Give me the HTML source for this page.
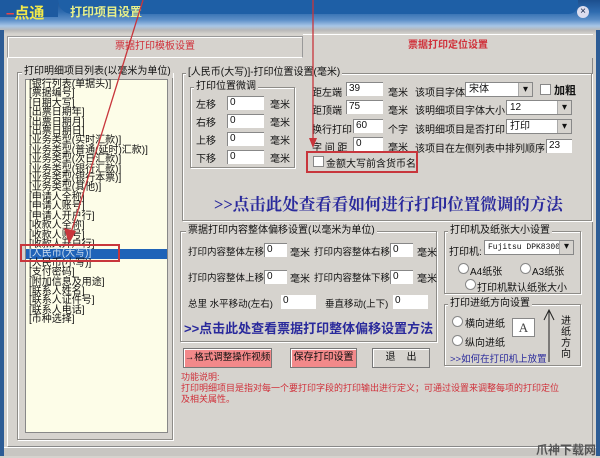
<!DOCTYPE html><html><head><meta charset="utf-8"><style>
*{margin:0;padding:0;box-sizing:border-box}
body{width:600px;height:456px;overflow:hidden;background:#d6d3ce;font-family:"Liberation Sans","Noto Sans CJK SC",sans-serif;font-size:10px;color:#111;position:relative}
.a{position:absolute;white-space:nowrap}
.gb{position:absolute;border:1px solid #8e8c88;box-shadow:inset 1px 1px 0 #fff,1px 1px 0 #fff}
.gt{position:absolute;background:#d6d3ce;padding:0 2px;white-space:nowrap;font-size:10px;line-height:12px}
.in{position:absolute;background:#fff;border-top:1px solid #888;border-left:1px solid #888;font-size:10px;line-height:12px;padding-left:2px;height:14px;white-space:nowrap}
.sel{position:absolute;background:#fff;border:1px solid #888;font-size:10px;line-height:13px;padding-left:3px;height:15px;white-space:nowrap;overflow:hidden}
.sel:after{content:"▾";position:absolute;right:0;top:0;width:13px;height:13px;background:#d6d3ce;font-size:10px;text-align:center;line-height:13px;border-left:1px solid #aaa}
.cb{position:absolute;width:11px;height:11px;background:#fff;border:1px solid #888}
.rd{position:absolute;width:11px;height:11px;border-radius:50%;background:#fff;border:1px solid #888}
.btn{position:absolute;height:20px;border:1px solid #777;box-shadow:inset 1px 1px 0 #fff;text-align:center;line-height:18px;font-size:10px;white-space:nowrap}
</style></head><body>
<div class="a" style="left:0;top:0;width:600px;height:34px;background:linear-gradient(#1c4f8e 0,#2f6cb0 12px,#5d8fc8 20px,#a8c6e6 26px,#b8b8b8 30px,#d6d3ce 34px)"></div>
<div class="a" style="left:0;top:0;width:58px;height:17px;background:#1d5aa0"></div>
<div class="a" style="left:58px;top:0;width:520px;height:14px;background:#1e5fa6;border-radius:0 0 20px 30px"></div>
<div class="a" style="left:6px;top:2px;font-size:15px;font-weight:bold;color:#f2e94a"><span style="color:#e44">–</span>点通</div>
<div class="a" style="left:70px;top:3px;font-size:12px;font-weight:bold;color:#e8f08a">打印项目设置</div>
<div class="a" style="left:577px;top:6px;width:12px;height:12px;border-radius:50%;background:#dde;color:#124;font-size:10px;text-align:center;line-height:12px">×</div>
<div class="a" style="left:0;top:30px;width:4px;height:426px;background:#2d5c95"></div>
<div class="a" style="left:596px;top:30px;width:4px;height:426px;background:#2d5c95"></div>
<div class="a" style="left:7px;top:36px;width:296px;height:22px;border:1px solid #999;border-bottom:1px solid #fff;box-shadow:inset 1px 1px 0 #fff;text-align:center;line-height:20px;color:#d0303a;font-size:10px">票据打印模板设置</div>
<div class="a" style="left:303px;top:34px;width:290px;height:24px;border-top:1px solid #fff;text-align:center;line-height:22px;color:#d0303a;font-weight:bold;font-size:10px">票据打印定位设置</div>
<div class="a" style="left:7px;top:58px;width:586px;height:389px;border-left:1px solid #fff;border-right:1px solid #888;border-bottom:1px solid #888"></div>
<div class="gb" style="left:17px;top:72px;width:156px;height:368px"></div>
<div class="gt" style="left:22px;top:66px">打印明细项目列表(以毫米为单位)</div>
<div class="a" style="left:25px;top:79px;width:143px;height:354px;background:#fdfde8;border:1px solid #888"></div>
<div class="a" style="left:26px;top:249px;width:141px;height:10px;background:#1f63b8"></div>
<div class="a" style="left:29px;top:80px;font-size:10px;line-height:9.4px">[银行列表(单据头)]<br>[票据编号]<br>[日期大写]<br>[出票日期年]<br>[出票日期月]<br>[出票日期日]<br>[业务类型(实时汇款)]<br>[业务类型(普通(延时)汇款)]<br>[业务类型(次日汇款)]<br>[业务类型(银行汇款)]<br>[业务类型(银行本票)]<br>[业务类型(其他)]<br>[申请人全称]<br>[申请人账号]<br>[申请人开户行]<br>[收款人全称]<br>[收款人账号]<br>[收款人开户行]<br><span style="color:#cde">[人民币(大写)]</span><br>[人民币(小写)]<br>[支付密码]<br>[附加信息及用途]<br>[联系人姓名]<br>[联系人证件号]<br>[联系人电话]<br>[币种选择]</div>
<div class="a" style="left:20px;top:244px;width:100px;height:18px;border:2px solid #c8363c"></div>
<div class="gb" style="left:182px;top:73px;width:410px;height:148px"></div>
<div class="gt" style="left:186px;top:67px">[人民币(大写)]-打印位置设置(毫米)</div>
<div class="gb" style="left:190px;top:87px;width:105px;height:81px"></div>
<div class="gt" style="left:194px;top:81px">打印位置微调</div>
<div class="a" style="left:196px;top:97px;line-height:18px">左移<br>右移<br>上移<br>下移</div>
<div class="in" style="left:227px;top:96px;width:37px">0</div>
<div class="in" style="left:227px;top:114px;width:37px">0</div>
<div class="in" style="left:227px;top:132px;width:37px">0</div>
<div class="in" style="left:227px;top:150px;width:37px">0</div>
<div class="a" style="left:270px;top:97px;line-height:18px">毫米<br>毫米<br>毫米<br>毫米</div>
<div class="a" style="left:312px;top:84px">距左端</div><div class="in" style="left:346px;top:82px;width:37px">39</div><div class="a" style="left:388px;top:84px">毫米</div>
<div class="a" style="left:312px;top:102px">距顶端</div><div class="in" style="left:346px;top:100px;width:37px">75</div><div class="a" style="left:388px;top:102px">毫米</div>
<div class="a" style="left:312px;top:121px">换行打印</div><div class="in" style="left:353px;top:119px;width:30px">60</div><div class="a" style="left:388px;top:121px">个字</div>
<div class="a" style="left:312px;top:139px">字 间 距</div><div class="in" style="left:353px;top:137px;width:30px">0</div><div class="a" style="left:388px;top:139px">毫米</div>
<div class="a" style="left:415px;top:84px">该项目字体</div><div class="sel" style="left:465px;top:82px;width:68px">宋体</div>
<div class="cb" style="left:540px;top:84px"></div><div class="a" style="left:554px;top:82px;font-weight:bold;font-size:11px">加粗</div>
<div class="a" style="left:415px;top:102px">该明细项目字体大小</div><div class="sel" style="left:506px;top:100px;width:66px">12</div>
<div class="a" style="left:415px;top:121px">该明细项目是否打印</div><div class="sel" style="left:506px;top:119px;width:66px">打印</div>
<div class="a" style="left:415px;top:140px">该项目在左侧列表中排列顺序</div><div class="in" style="left:546px;top:139px;width:26px">23</div>
<div class="cb" style="left:313px;top:156px"></div><div class="a" style="left:326px;top:155px">金额大写前含货币名</div>
<div class="a" style="left:306px;top:151px;width:112px;height:22px;border:2px solid #c8363c"></div>
<div class="a" style="left:214px;top:191px;font-family:'Liberation Serif','Noto Serif CJK SC',serif;font-size:16.5px;font-weight:bold;color:#2a2a9c">&gt;&gt;点击此处查看看如何进行打印位置微调的方法</div>
<div class="gb" style="left:180px;top:231px;width:257px;height:111px"></div>
<div class="gt" style="left:186px;top:225px">票据打印内容整体偏移设置(以毫米为单位)</div>
<div class="a" style="left:188px;top:244px;font-size:9.5px">打印内容整体左移</div><div class="in" style="left:264px;top:243px;width:23px">0</div><div class="a" style="left:290px;top:244px">毫米</div>
<div class="a" style="left:314px;top:244px;font-size:9.5px">打印内容整体右移</div><div class="in" style="left:390px;top:243px;width:23px">0</div><div class="a" style="left:417px;top:244px">毫米</div>
<div class="a" style="left:188px;top:270px;font-size:9.5px">打印内容整体上移</div><div class="in" style="left:264px;top:270px;width:23px">0</div><div class="a" style="left:290px;top:270px">毫米</div>
<div class="a" style="left:314px;top:270px;font-size:9.5px">打印内容整体下移</div><div class="in" style="left:390px;top:270px;width:23px">0</div><div class="a" style="left:417px;top:270px">毫米</div>
<div class="a" style="left:188px;top:296px;font-size:9.5px">总里 水平移动(左右)</div><div class="in" style="left:281px;top:295px;width:35px;border:none">0</div>
<div class="a" style="left:325px;top:296px;font-size:9.5px">垂直移动(上下)</div><div class="in" style="left:393px;top:295px;width:35px;border:none">0</div>
<div class="a" style="left:184px;top:318px;font-size:13px;font-weight:bold;color:#2a2a9c">&gt;&gt;点击此处查看票据打印整体偏移设置方法</div>
<div class="gb" style="left:444px;top:231px;width:137px;height:63px"></div>
<div class="gt" style="left:448px;top:225px">打印机及纸张大小设置</div>
<div class="a" style="left:449px;top:243px">打印机:</div>
<div class="sel" style="left:484px;top:240px;width:90px;font-family:'Liberation Mono',monospace;font-size:8px">Fujitsu DPK8300E</div>
<div class="rd" style="left:458px;top:263px"></div><div class="a" style="left:470px;top:263px">A4纸张</div>
<div class="rd" style="left:520px;top:263px"></div><div class="a" style="left:532px;top:263px">A3纸张</div>
<div class="rd" style="left:465px;top:279px"></div><div class="a" style="left:477px;top:279px">打印机默认纸张大小</div>
<div class="gb" style="left:444px;top:304px;width:137px;height:62px"></div>
<div class="gt" style="left:448px;top:298px">打印进纸方向设置</div>
<div class="rd" style="left:452px;top:316px"></div><div class="a" style="left:465px;top:315px">横向进纸</div>
<div class="rd" style="left:452px;top:335px"></div><div class="a" style="left:465px;top:334px">纵向进纸</div>
<div class="a" style="left:450px;top:351px;color:#2a2a9c;font-size:9.5px">&gt;&gt;如何在打印机上放置</div>
<div class="a" style="left:512px;top:318px;width:23px;height:19px;background:#fff;border:1px solid #888;font-family:'Liberation Serif',serif;font-size:13px;text-align:center;line-height:18px;color:#444">A</div>
<svg class="a" style="left:542px;top:308px" width="14" height="56"><path d="M7 2V54M2 12L7 2L12 12" stroke="#222" fill="none" stroke-width="1"/></svg>
<div class="a" style="left:561px;top:316px;width:11px;line-height:11px;white-space:normal;font-size:10px">进纸方向</div>
<div class="btn" style="left:183px;top:348px;width:89px;background:#f2898a;font-size:9.5px">→格式调整操作视频</div>
<div class="btn" style="left:290px;top:348px;width:67px;background:#f2898a">保存打印设置</div>
<div class="btn" style="left:372px;top:348px;width:58px;background:#d6d3ce">退&nbsp;&nbsp;&nbsp;&nbsp;出</div>
<div class="a" style="left:181px;top:372px;color:#d0303a;font-size:9px;line-height:11px">功能说明:<br>打印明细项目是指对每一个要打印字段的打印输出进行定义；可通过设置来调整每项的打印定位<br>及相关属性。</div>
<div class="a" style="left:4px;top:447px;width:592px;height:9px;background:#c8c6c2;border-top:1px solid #fff"></div>
<div class="a" style="left:536px;top:441px;font-size:12px;font-weight:bold;color:#555">爪神下载网</div>
<svg class="a" style="left:0;top:0" width="600" height="456"><path d="M143 0L70 236" stroke="#c8363c" stroke-width="1.3" fill="none"/><path d="M64 228L69 244L76 231Z" fill="#c8363c"/><path d="M313 0V142" stroke="#c8363c" stroke-width="1.3"/><path d="M309 138L313 148L317 138Z" fill="#c8363c"/></svg>
</body></html>
